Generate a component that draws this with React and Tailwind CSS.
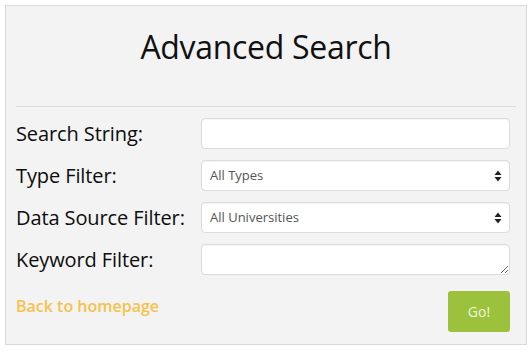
import { useState } from 'react';

function SortArrows() {
    return (
        <svg width="8" height="13" viewBox="0 0 8 13" className="pointer-events-none absolute right-[8px] top-1/2 -translate-y-1/2">
            <path d="M4 1 L7.5 5.5 L0.5 5.5 Z" fill="#222" />
            <path d="M4 12 L7.5 7.5 L0.5 7.5 Z" fill="#222" />
        </svg>
    );
}

export default function App() {
    const [search, setSearch] = useState('');
    const [keyword, setKeyword] = useState('');

    const field = 'w-full h-[31px] rounded-[4px] border border-[#dcdcdc] bg-white px-[8px] text-[13px] text-[#555] outline-none shadow-[inset_0_1px_1px_rgba(0,0,0,0.05)]';
    const label = 'text-[20px] text-[#0d0d0d] tracking-[-0.1px]';

    return (
        <div className="min-h-screen bg-white p-[5px] font-['Open_Sans',sans-serif]">
            <div className="border border-[#d9d9d9] bg-[#f3f3f3] px-[10px] pb-[12px]">
                {/* Title */}
                <div className="flex h-[100px] items-center justify-center pb-[18px]">
                    <h1 className="text-[32px] font-normal text-[#111] tracking-[-0.3px]">Advanced Search</h1>
                </div>
                <hr className="border-0 border-t border-[#dcdcdc]" />

                {/* Form */}
                <div className="mt-[11px] grid grid-cols-[185px_1fr] gap-y-[11px] pr-[6px] items-center">
                    <label className={label}>Search String:</label>
                    <input className={field} value={search} onChange={e => setSearch(e.target.value)} />

                    <label className={label}>Type Filter:</label>
                    <div className="relative">
                        <select className={`${field} appearance-none`} defaultValue="all">
                            <option value="all">All Types</option>
                        </select>
                        <SortArrows />
                    </div>

                    <label className={label}>Data Source Filter:</label>
                    <div className="relative">
                        <select className={`${field} appearance-none`} defaultValue="all">
                            <option value="all">All Universities</option>
                        </select>
                        <SortArrows />
                    </div>

                    <label className={label}>Keyword Filter:</label>
                    <textarea
                        className={`${field} block resize py-[4px]`}
                        value={keyword}
                        onChange={e => setKeyword(e.target.value)}
                    />
                </div>

                <div className="mt-[16px] flex items-center justify-between pr-[6px]">
                    <a href="#" className="text-[16px] font-semibold text-[#f6c24c] -mt-[12px]">Back to homepage</a>
                    <button className="h-[41px] w-[62px] rounded-[3px] bg-[#9cc23d] text-[14px] text-[#eef5dc]">Go!</button>
                </div>
            </div>
        </div>
    );
}
